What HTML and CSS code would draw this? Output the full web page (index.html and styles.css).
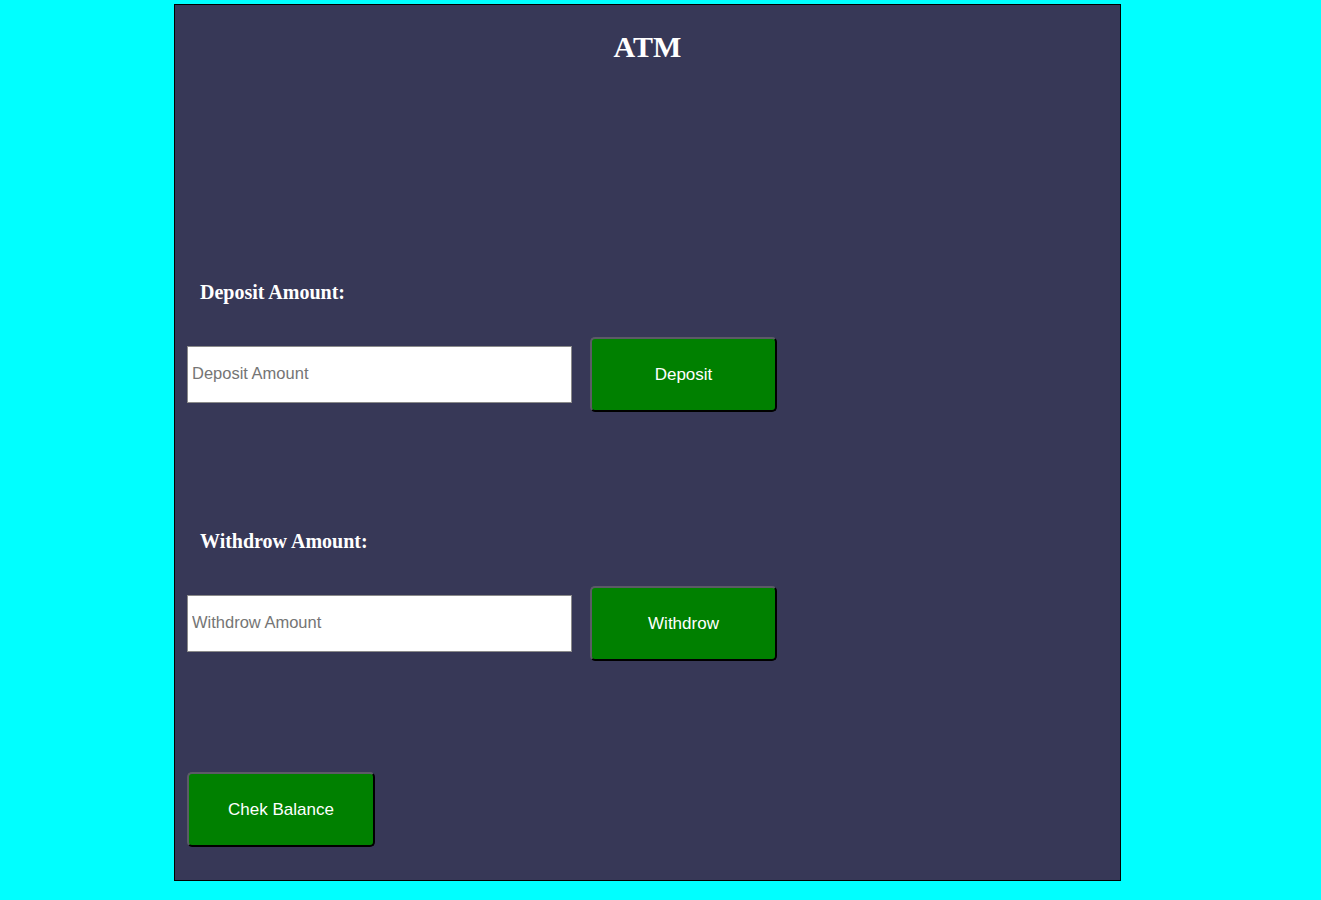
FILE: index.html
```html
<!DOCTYPE html>
<html>
<head>
<meta charset="utf-8">
<link rel="stylesheet" href="styles.css">
</head>
<body>
<div class="atm">
  <h1 class="title">ATM</h1>
  <section class="block block-deposit">
    <h3 class="label">Deposit Amount:</h3>
    <div class="row">
      <input class="amount" type="text" placeholder="Deposit Amount">
      <button class="btn">Deposit</button>
    </div>
  </section>
  <section class="block block-withdraw">
    <h3 class="label">Withdrow Amount:</h3>
    <div class="row">
      <input class="amount" type="text" placeholder="Withdrow Amount">
      <button class="btn">Withdrow</button>
    </div>
  </section>
  <div class="balance">
    <button class="btn btn-balance">Chek Balance</button>
  </div>
</div>
</body>
</html>
```
FILE: styles.css
```css
html, body {
  margin: 0;
  padding: 0;
  background: #00ffff;
}
.atm {
  box-sizing: border-box;
  width: 947px;
  height: 877px;
  margin: 4px 0 0 174px;
  border: 1px solid #000;
  background: #373857;
  padding: 23px 12px 0 12px;
  display: flex;
  flex-direction: column;
  font-family: "Liberation Serif", "Times New Roman", serif;
}
.title {
  margin: 0;
  text-align: center;
  font-size: 30px;
  line-height: 37px;
  font-weight: bold;
  color: #fff;
}
.block {
  display: flex;
  flex-direction: column;
}
.block-deposit {
  margin-top: 216px;
}
.block-withdraw {
  margin-top: 118px;
}
.label {
  margin: 0 0 0 13px;
  font-size: 20px;
  line-height: 23px;
  font-weight: bold;
  color: #fff;
}
.row {
  display: flex;
  align-items: center;
  gap: 18px;
  margin-top: 33px;
}
.amount {
  box-sizing: border-box;
  width: 385px;
  height: 57px;
  margin: 0;
  padding: 0 0 2px 4px;
  border: 1px solid #8a8a8a;
  background: #fff;
  font-family: "Liberation Sans", Arial, sans-serif;
  font-size: 16.5px;
  color: #000;
  outline: none;
}
.amount::placeholder {
  color: #757575;
}
.btn {
  box-sizing: border-box;
  width: 187px;
  height: 75px;
  margin: 0;
  padding: 0;
  background: #008000;
  color: #fff;
  font-family: "Liberation Sans", Arial, sans-serif;
  font-size: 17px;
  border-style: solid;
  border-width: 2px;
  border-color: #5b5b66 #000 #000 #5b5b66;
  border-radius: 5px;
  cursor: pointer;
}
.btn-balance {
  width: 188px;
}
.balance {
  margin-top: 111px;
  display: flex;
}
```
